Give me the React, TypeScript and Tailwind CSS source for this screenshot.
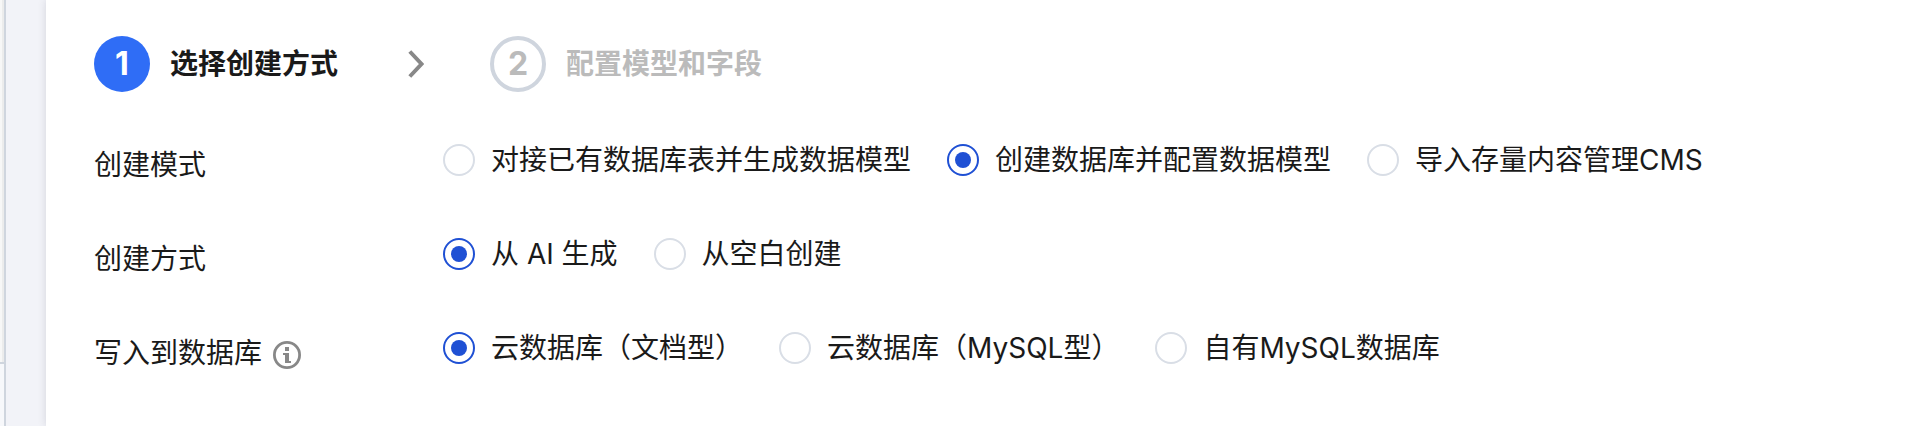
import { useState } from "react";

type RadioRowProps = {
  name: string;
  label: string;
  options: string[];
  initial: number;
  hint?: boolean;
};

function InfoIcon() {
  return (
    <svg viewBox="0 0 28 28" className="size-7 shrink-0" aria-hidden="true">
      <circle cx="14" cy="14" r="12.6" fill="none" stroke="#888" strokeWidth="2.8" />
      <path d="M12 6h4v4h-4zM10 12h6v8h2v2h-6v-8h-2z" fill="#888" />
    </svg>
  );
}

function RadioRow({ name, label, options, initial, hint }: RadioRowProps) {
  const [selected, setSelected] = useState(initial);
  return (
    <div role="radiogroup" aria-labelledby={`${name}-label`} className="flex items-start">
      <div className="mt-[5px] flex w-[349px] shrink-0 items-center gap-[11px]">
        <span id={`${name}-label`} className="leading-8">{label}</span>
        {hint && (
          <button type="button" aria-label="说明" className="flex pt-1">
            <InfoIcon />
          </button>
        )}
      </div>
      <div className="flex flex-wrap gap-x-9 gap-y-4">
        {options.map((option, i) => (
          <label key={option} className="flex cursor-pointer items-center gap-4 leading-8">
            <input
              type="radio"
              name={name}
              checked={selected === i}
              onChange={() => setSelected(i)}
              className="grid size-8 shrink-0 appearance-none place-items-center rounded-full border-2 border-[#d9dee6] bg-white before:size-4 before:rounded-full checked:border-[#1f50d4] checked:before:bg-[#1f50d4]"
            />
            <span>{option}</span>
          </label>
        ))}
      </div>
    </div>
  );
}

export default function App() {
  return (
    <div className="flex min-h-screen bg-[#f2f3f8] font-[Inter,'Noto_Sans_CJK_SC',sans-serif] text-[28px] text-[#1a1a1a]">
      <div className="flex w-1.5 shrink-0 flex-col border-r-2 border-[#cfd5de]">
        <div className="h-[362px] border-r-2 border-[#ececec] bg-[#f7f7f7]" />
        <div className="flex-1 border-t-2 border-[#cfd5de] bg-[#f7f8fb]" />
      </div>
      <main className="ml-10 flex-1 bg-white px-12 pt-9 shadow-[0_0_8px_rgba(54,58,80,0.16)]">
        <ol className="flex items-center font-bold">
          <li className="flex items-center gap-5" aria-current="step">
            <span className="flex size-14 items-center justify-center rounded-full bg-[#2f6df6] text-[32px] text-white">1</span>
            <span>选择创建方式</span>
          </li>
          <li className="ml-[70px] flex items-center gap-5 text-[#bbb]">
            <svg viewBox="0 0 16 28" className="mr-[46px] h-7 w-4" aria-hidden="true">
              <path d="M1.8 1.5 13.5 14 1.8 26.5" fill="none" stroke="#888" strokeWidth="4" />
            </svg>
            <span className="flex size-14 items-center justify-center rounded-full border-4 border-[#cfd5de] text-[32px]">2</span>
            <span>配置模型和字段</span>
          </li>
        </ol>
        <form className="mt-[52px] flex flex-col gap-[57px]">
          <RadioRow
            name="mode"
            label="创建模式"
            options={["对接已有数据库表并生成数据模型", "创建数据库并配置数据模型", "导入存量内容管理CMS"]}
            initial={1}
          />
          <RadioRow name="method" label="创建方式" options={["从 AI 生成", "从空白创建"]} initial={0} />
          <RadioRow
            name="target"
            label="写入到数据库"
            options={["云数据库（文档型）", "云数据库（MySQL型）", "自有MySQL数据库"]}
            initial={0}
            hint
          />
        </form>
      </main>
    </div>
  );
}
